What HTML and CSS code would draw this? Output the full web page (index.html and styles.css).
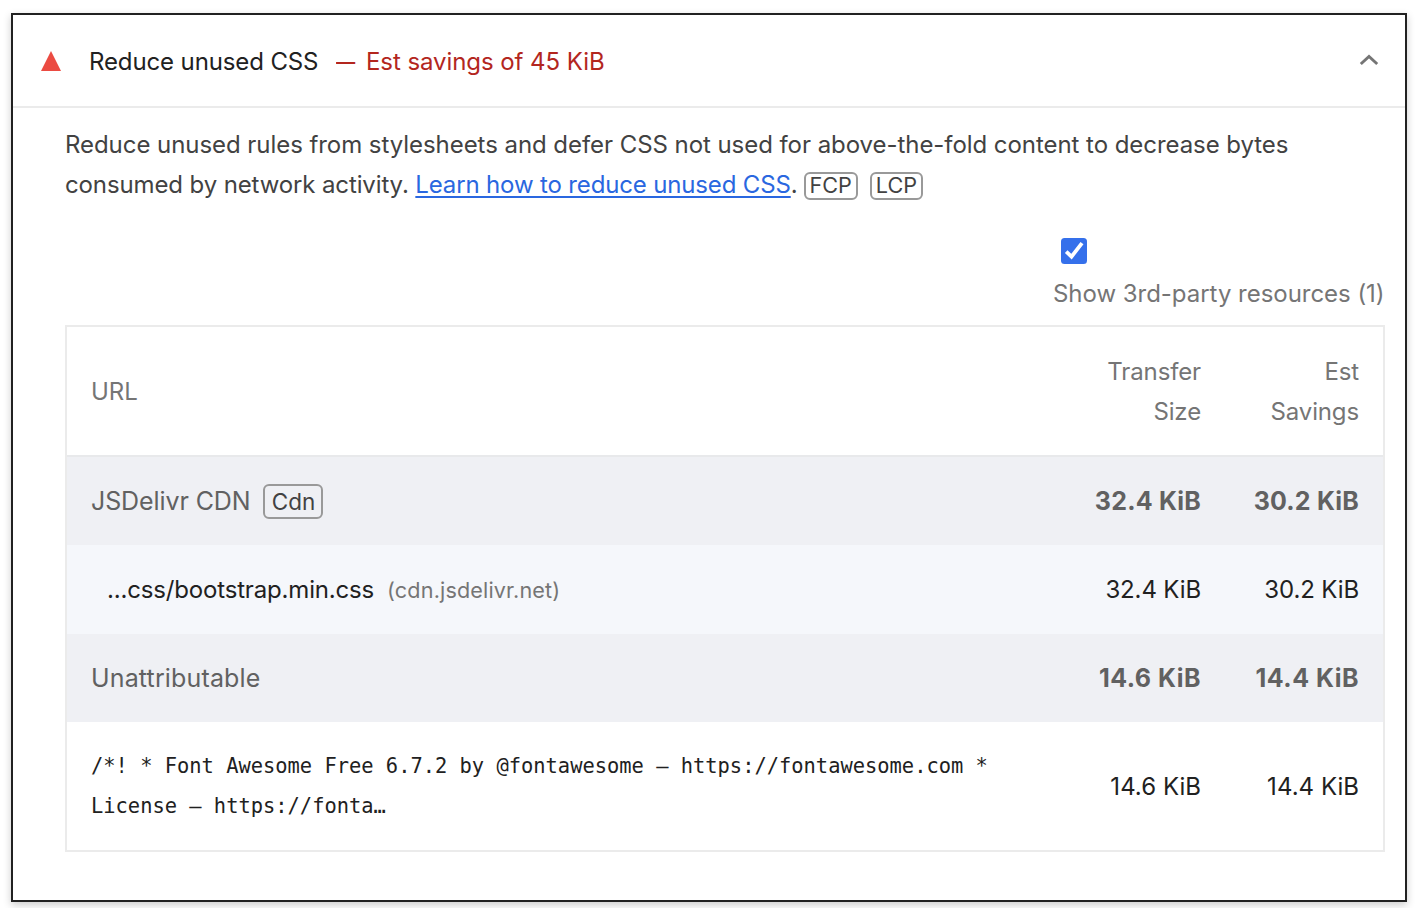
FILE: index.html
```html
<!DOCTYPE html>
<html lang="en">
<head>
<meta charset="utf-8">
<title>Reduce unused CSS</title>
<link rel="stylesheet" href="styles.css">
</head>
<body>
<main class="audit">
  <header class="audit-header">
    <svg class="icon-fail" width="20" height="20" viewBox="0 0 20 20"><path d="M10 0L20 20H0Z" fill="#eb4b42"/></svg>
    <span class="title">Reduce unused CSS</span>
    <span class="dash">—</span>
    <span class="savings">Est savings of 45 KiB</span>
    <svg class="chevron" width="20" height="14" viewBox="0 0 20 14"><path d="M1.8 11L10 3.4L18.2 11" fill="none" stroke="#757575" stroke-width="2.9"/></svg>
  </header>
  <section class="audit-body">
    <p class="description"><span class="line-one">Reduce unused rules from stylesheets and defer CSS not used for above-the-fold content to decrease bytes</span><br><span class="line-two">consumed by network activity. <a class="link" href="#">Learn how to reduce unused CSS</a>.</span><span class="metric">FCP</span><span class="metric">LCP</span></p>
    <div class="filter">
      <svg class="checkbox" width="26" height="26" viewBox="0 0 26 26"><rect width="26" height="26" rx="3.5" fill="#3570eb"/><path d="M5.2 13.6L10.5 18.6L21 5.2" fill="none" stroke="#fff" stroke-width="3.8"/></svg>
      <span class="filter-label">Show 3rd-party resources (1)</span>
    </div>
    <div class="table">
      <div class="row head"><span>URL</span><span class="num transfer">Transfer<br>Size</span><span class="num est">Est<br>Savings</span></div>
      <div class="row group"><span class="entity"><span class="entity-name cdn">JSDelivr CDN</span><span class="tag">Cdn</span></span><span class="num">32.4 KiB</span><span class="num">30.2 KiB</span></div>
      <div class="row sub"><span class="url"><span class="file">...css/bootstrap.min.css</span><span class="host">(cdn.jsdelivr.net)</span></span><span class="num">32.4 KiB</span><span class="num">30.2 KiB</span></div>
      <div class="row group unattributed"><span class="entity-name">Unattributable</span><span class="num">14.6 KiB</span><span class="num">14.4 KiB</span></div>
      <div class="row code-row"><span class="code">/*! * Font Awesome Free 6.7.2 by @fontawesome – https://fontawesome.com *<br>License – https://fonta…</span><span class="num">14.6 KiB</span><span class="num">14.4 KiB</span></div>
    </div>
  </section>
</main>
</body>
</html>
```
FILE: styles.css
```css
* { box-sizing: border-box; }
body { margin: 0; padding: 13px 9px 0 11px; height: 908px; overflow: hidden; background: #fff; color: #212121; font: 24px/40px Inter, "Liberation Sans", sans-serif; }
.audit { height: 889px; border: 2px solid #212121; background: #fff; box-shadow: 0 3px 8px rgba(0,0,0,.2); }
.audit-header { display: flex; align-items: center; height: 93px; padding: 0 26px 0 28px; border-bottom: 2px solid #ebebeb; white-space: nowrap; }
.icon-fail { margin-right: 28px; }
.title, .dash, .savings { padding-top: 2px; letter-spacing: -.07px; }
.title { width: 247px; letter-spacing: -.12px; }
.dash { width: 30px; color: #b3261e; transform: scaleX(.8); transform-origin: left; }
.savings { color: #b3261e; }
.chevron { margin: -2px 0 0 auto; }
.audit-body { padding: 17px 20px 0 52px; }
.description { margin: 0; color: #424242; white-space: nowrap; }
.line-one { letter-spacing: -.055px; }
.line-two { letter-spacing: -.12px; }
.link { color: #2a67e0; letter-spacing: -.15px; text-decoration-thickness: 2px; text-underline-offset: 3px; }
.metric { display: inline-block; height: 28px; margin: 0 6px; padding: 0 4px; border: 2px solid #999; border-radius: 6px; font-size: 21.6px; line-height: 23px; }
.filter { display: flex; flex-direction: column; width: 332px; margin: 33px 0 0 auto; color: #757575; white-space: nowrap; }
.checkbox { margin-left: 8px; }
.filter-label { margin: 10px 0 11px; letter-spacing: -.03px; }
.table { border: 2px solid #ebebeb; }
.row { display: grid; grid-template-columns: minmax(0, 1fr) 158px 158px; align-items: center; height: 88px; padding: 0 24px; white-space: nowrap; }
.num { text-align: right; letter-spacing: -.13px; }
.head { height: 130px; padding-top: 2px; border-bottom: 2px solid #e8e9eb; color: #757575; }
.group { background: #eff0f4; color: #616161; }
.group .num { font-size: 25px; font-weight: 700; letter-spacing: .2px; }
.group .entity-name { font-size: 25px; letter-spacing: .15px; }
.group .cdn { letter-spacing: -.1px; }
.unattributed .num { letter-spacing: .5px; }
.sub { height: 89px; padding-top: 1px; background: #f5f7fb; }
.entity, .url { display: flex; align-items: center; }
.tag { width: 60px; height: 35px; margin: 1px 0 0 13px; border: 2px solid #999; border-radius: 6px; color: #424242; font-size: 22.5px; line-height: 32px; text-align: center; }
.url { padding-left: 16px; }
.file { letter-spacing: -.17px; }
.host { margin-left: 13px; color: #757575; font-size: 21.6px; letter-spacing: .15px; }
.code-row { height: 128px; padding-top: 2px; }
.code-row .num { letter-spacing: .03px; }
.code { padding-bottom: 3px; font: 20.42px/40px "DejaVu Sans Mono", monospace; }
```
